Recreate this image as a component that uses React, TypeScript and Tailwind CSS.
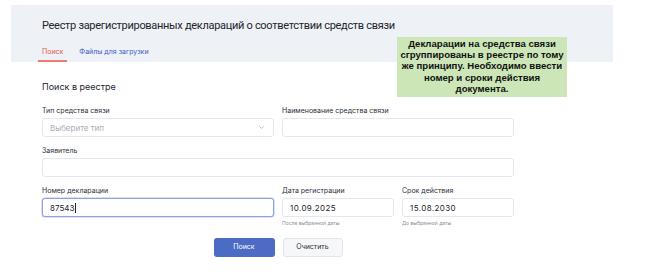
const Field = ({ label, children, hint, className = "" }: { label: string; children: React.ReactNode; hint?: string; className?: string }) => (
  <div className={className}>
    <p className="h-[9px] mb-[3px] text-[7px] leading-[9px] text-[#2b2f38]">{label}</p>
    {children}
    {hint && <p className="mt-[3px] text-[5px] leading-[6px] text-[#8a8f99]">{hint}</p>}
  </div>
)

const Box = ({ children, focused = false }: { children?: React.ReactNode; focused?: boolean }) => (
  <div
    className={
      "flex h-[19px] items-center rounded-[3px] border bg-white px-[7px] text-[8px] " +
      (focused ? "border-[#8ea2dc] shadow-[0_0_0_0.5px_#b7c4ea]" : "border-[#e4e7ec]")
    }
  >
    {children}
  </div>
)

const App = () => {
  return (
    <div className="relative h-[276px] w-[648px] overflow-hidden bg-white pt-[5px] font-['Inter',sans-serif] text-[#1f2229]">
      <header className="ml-[11px] w-[602px] bg-[#eef1f6] pl-[31px] pt-[14px]">
        <h1 className="font-['Roboto',sans-serif] text-[11px] leading-[14px] tracking-[-0.3px] text-[#22252c]">
          Реестр зарегистрированных деклараций о соответствии средств связи
        </h1>
        <nav className="mt-[14px] flex gap-[12px] text-[7px]">
          <span className="-ml-[4px] border-b-2 border-[#ef7a72] px-[4px] pb-[3px] leading-[10px] text-[#e5574d]">Поиск</span>
          <span className="pb-[3px] leading-[10px] text-[#3c5fc4]">Файлы для загрузки</span>
        </nav>
      </header>

      <div className="absolute left-[397px] top-[37px] flex h-[60px] w-[170px] items-center justify-center whitespace-nowrap bg-[#cde6b8] pb-[2px] text-center font-['Liberation_Sans',Arial,sans-serif] text-[9.6px] font-bold leading-[11.2px] text-[#111]">
        <p>
          Декларации на средства связи
          <br />
          сгруппированы в реестре по тому
          <br />
          же принципу. Необходимо ввести
          <br />
          номер и сроки действия
          <br />
          документа.
        </p>
      </div>

      <main className="ml-[42px] w-[472px] pt-[19px]">
        <h2 className="text-[9px] leading-[12px] text-[#22252c]">Поиск в реестре</h2>

        <div className="mt-[13px] grid grid-cols-4 gap-x-2 gap-y-[9px]">
          <Field label="Тип средства связи" className="col-span-2">
            <Box>
              <span className="flex-1 text-[#a9aeb8]">Выберите тип</span>
              <svg width="7" height="7" viewBox="0 0 24 24" fill="none" stroke="#9aa0aa" strokeWidth="2.5" strokeLinecap="round" strokeLinejoin="round" className="mr-[1px]">
                <path d="M6 9l6 6 6-6" />
              </svg>
            </Box>
          </Field>
          <Field label="Наименование средства связи" className="col-span-2">
            <Box />
          </Field>
          <Field label="Заявитель" className="col-span-4">
            <Box />
          </Field>
          <Field label="Номер декларации" className="col-span-2">
            <Box focused>
              <span className="text-[#22252c]">87543</span>
              <span className="ml-[0.5px] h-[10px] w-px bg-[#22252c]" />
            </Box>
          </Field>
          <Field label="Дата регистрации" hint="После выбранной даты">
            <Box>
              <span className="tracking-[0.4px] text-[#22252c]">10.09.2025</span>
            </Box>
          </Field>
          <Field label="Срок действия" hint="До выбранной даты">
            <Box>
              <span className="tracking-[0.4px] text-[#22252c]">15.08.2030</span>
            </Box>
          </Field>
        </div>

        <div className="mt-[12px] flex justify-center gap-2 text-[7px]">
          <button className="h-[19px] w-[61px] rounded-[3px] bg-[#4b6bc5] text-white">Поиск</button>
          <button className="h-[19px] w-[60px] rounded-[3px] border border-[#e2e5ea] bg-[#f6f7f9] text-[#2b2f38]">Очистить</button>
        </div>
      </main>
    </div>
  )
}

export default App
